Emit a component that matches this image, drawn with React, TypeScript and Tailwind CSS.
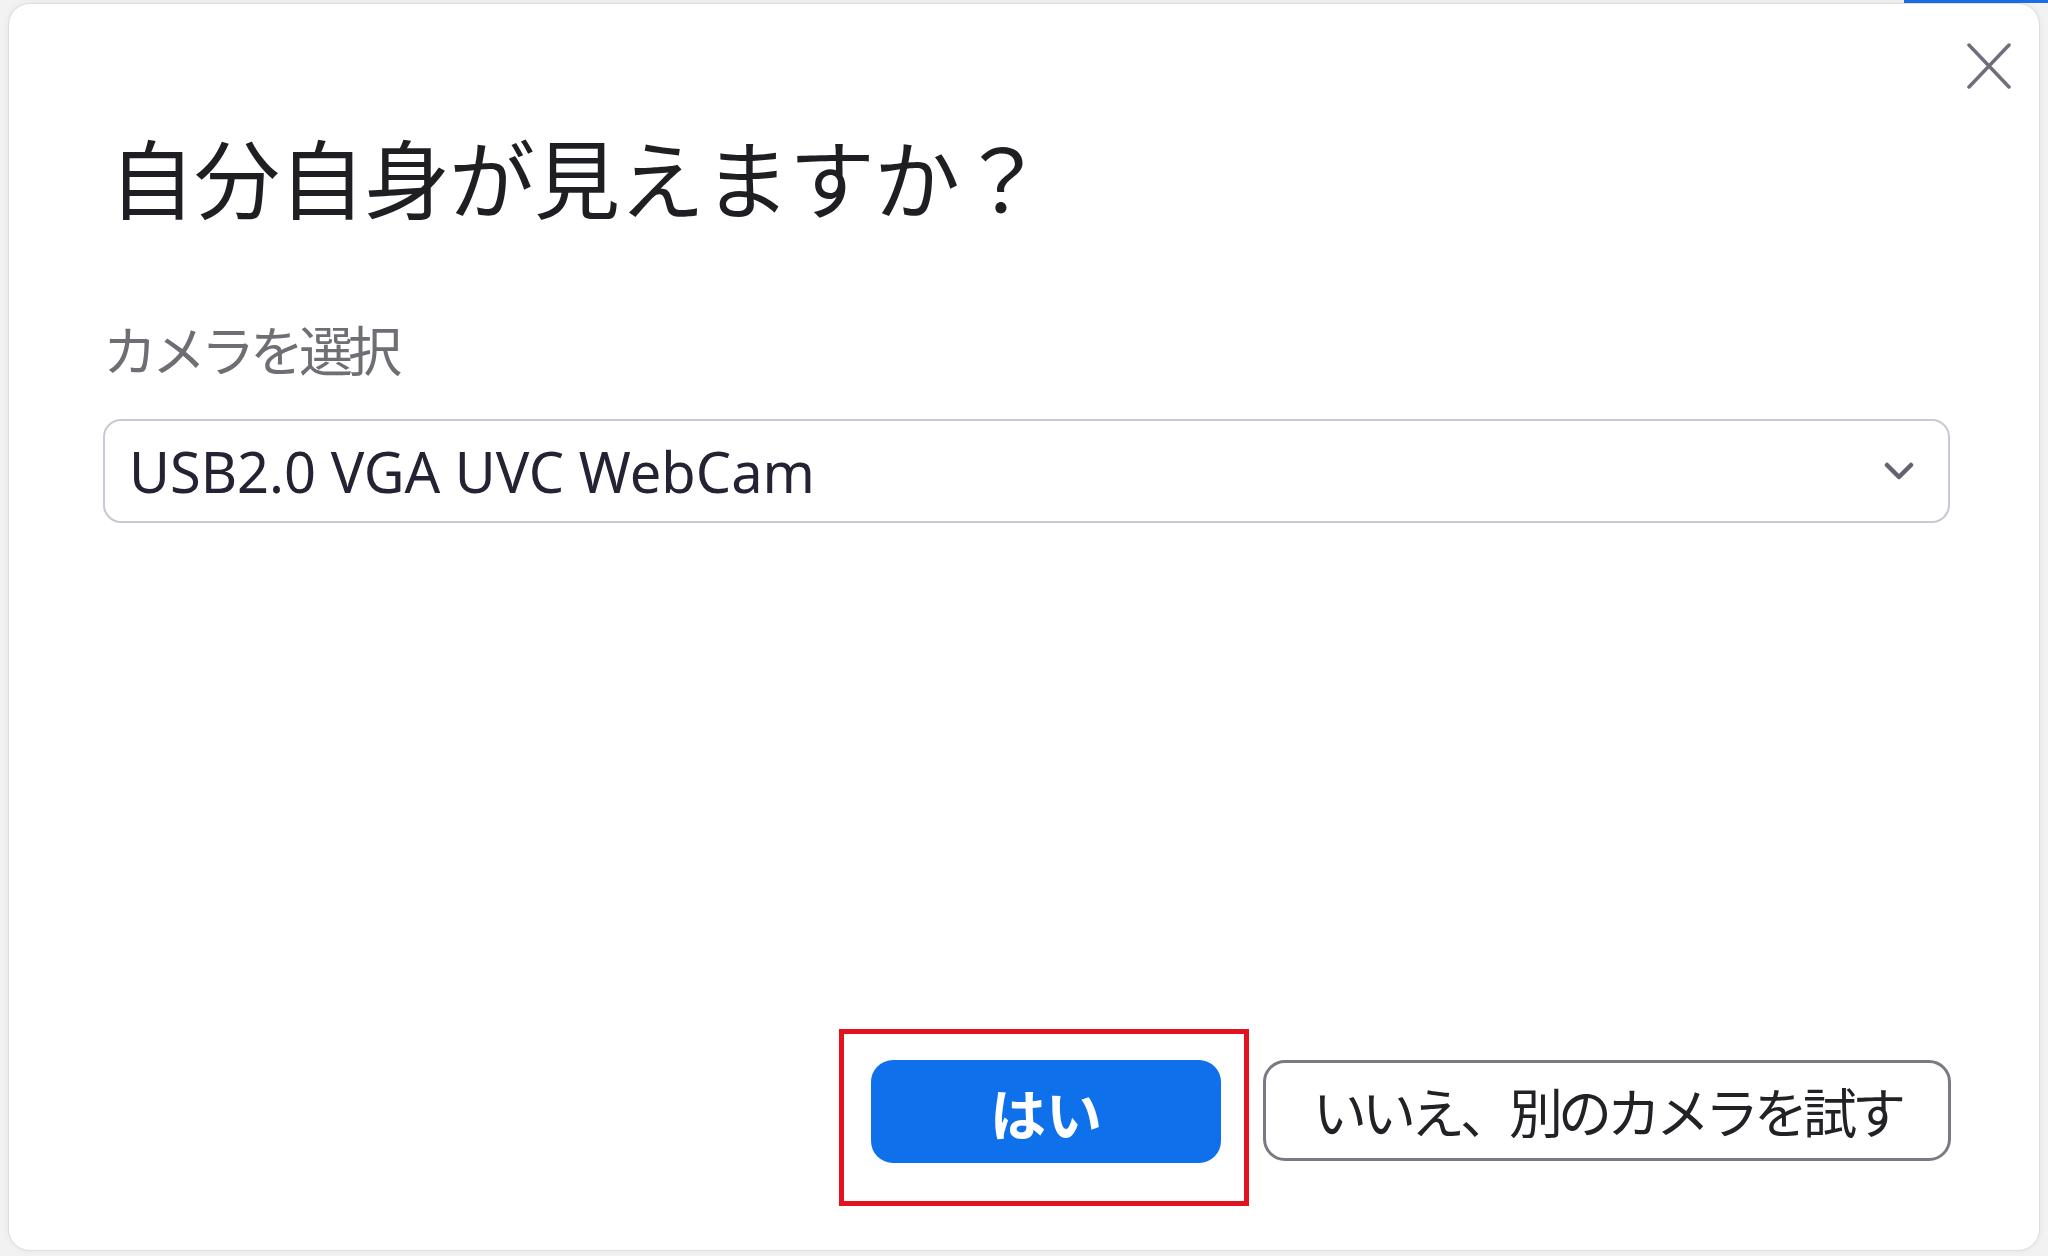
import { useState } from 'react'

const cams = ['USB2.0 VGA UVC WebCam']

function CloseIcon() {
  return (
    <svg width="46" height="46" viewBox="0 0 46 46" fill="none">
      <path d="M3 2L43 44M43 2L3 44" stroke="#6f6f7b" strokeWidth="3.5" strokeLinecap="round" />
    </svg>
  )
}

function Chevron() {
  return (
    <svg width="30" height="18" viewBox="0 0 30 18" fill="none">
      <path d="M3 3L15 15L27 3" stroke="#626270" strokeWidth="4.5" strokeLinecap="round" strokeLinejoin="round" />
    </svg>
  )
}

export default function App() {
  const [cam] = useState(cams[0])
  const jp = "font-['Noto_Sans_CJK_JP',sans-serif]"
  return (
    <div className="h-[1256px] w-[2048px] overflow-hidden bg-[#f2f2f3] flex flex-col">
      <div className="h-[3px] flex justify-end">
        <div className="w-[144px] bg-[#1a6fe8]" />
      </div>
      <div className="flex pl-[8px]">
        <div className="w-[2032px] h-[1248px] rounded-[22px] bg-white border border-[#dedee2] shadow-[0_0_6px_rgba(0,0,0,0.06)] flex flex-col">
          <div className="flex justify-end pt-[39px] pr-[27px]">
            <button className="w-[46px] h-[46px]">
              <CloseIcon />
            </button>
          </div>
          <h1 className={`${jp} text-[86px] leading-none font-normal text-[#1f1f23] pl-[100px] mt-[44px] tracking-[-1px]`}>
            自分自身が見えますか？
          </h1>
          <div className="px-[89px] pl-[94px] flex flex-col">
            <label className={`${jp} text-[54px] leading-none text-[#6e6e74] tracking-[-5px] mt-[103px]`}>
              カメラを選択
            </label>
            <div className="mt-[43px] h-[104px] rounded-[18px] border-2 border-[#c9c9d3] flex items-center justify-between pl-[24px] pr-[34px]">
              <span className="font-['Noto_Sans',sans-serif] text-[56px] text-[#232333] leading-none">{cam}</span>
              <Chevron />
            </div>
          </div>
          <div className="mt-auto mb-[44px] flex justify-end items-start pr-[88px] gap-[14px]">
            <div className="border-[5px] border-[#e3121f] pt-[26px] pb-[38px] pl-[27px] pr-[23px]">
              <button className={`${jp} w-[350px] h-[103px] rounded-[22px] bg-[#0e71eb] text-white text-[56px] font-bold leading-none`}>
                はい
              </button>
            </div>
            <button className={`${jp} mt-[31px] w-[688px] h-[101px] rounded-[22px] border-[3px] border-[#7a7a82] bg-white text-[#222226] text-[54px] leading-none tracking-[-5px] flex items-center justify-center`}>
              いいえ、別のカメラを試す
            </button>
          </div>
        </div>
      </div>
    </div>
  )
}
